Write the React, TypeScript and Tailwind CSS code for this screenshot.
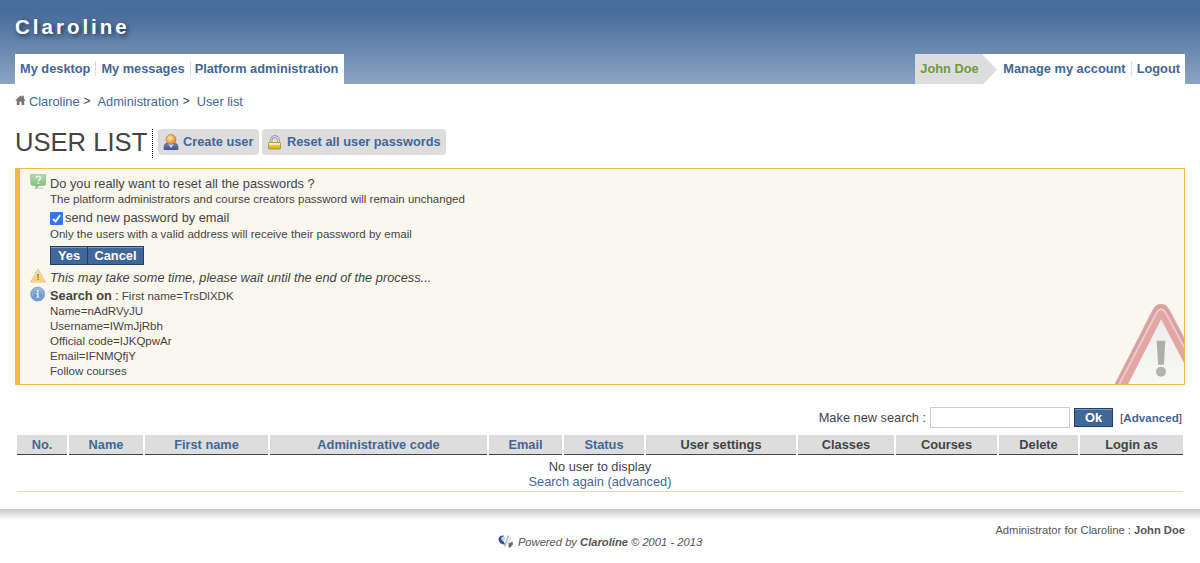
import React from "react";

function HomeIcon() {
  return (
    <svg className="mr-[3px] mb-[2px] h-[10px] w-[11px]" viewBox="0 0 10 10">
      <path d="M0 5.200L5 .6l1.600 1.500V.8h1.800v3L10 5.200l-.6.7-.7-.5V10H6V6.800H4V10H1.300V5.400l-.7.5z" fill="#7d736e" />
    </svg>
  );
}

function UserIcon() {
  return (
    <svg className="h-4 w-4 shrink-0" viewBox="0 0 16 16">
      <defs>
        <radialGradient id="face" cx=".4" cy=".35" r=".7">
          <stop offset="0" stopColor="#ffe3ae" />
          <stop offset=".55" stopColor="#f2a957" />
          <stop offset="1" stopColor="#c57a30" />
        </radialGradient>
        <linearGradient id="coat" x1="0" y1="0" x2="0" y2="1">
          <stop offset="0" stopColor="#6684c4" />
          <stop offset="1" stopColor="#35549f" />
        </linearGradient>
      </defs>
      <path d="M1 16v-3.500q.3-3 3.300-3.400h7.400q3 .4 3.300 3.400V16z" fill="url(#coat)" stroke="#49619c" strokeWidth=".6" />
      <path d="M5 9.500l3 4.500 3-4.500z" fill="#d9e4f5" />
      <path d="M1 14.700h2.500V16H1zM12.500 14.700H15V16h-2.500z" fill="#9b4943" />
      <circle cx="8" cy="5.500" r="5" fill="url(#face)" stroke="#a9713f" strokeWidth=".6" />
    </svg>
  );
}

function LockIcon() {
  return (
    <svg className="h-4 w-4 shrink-0" viewBox="0 0 16 16">
      <defs>
        <linearGradient id="lock" x1="0" y1="0" x2="0" y2="1">
          <stop offset="0" stopColor="#f3e78a" />
          <stop offset=".25" stopColor="#fffbc0" />
          <stop offset=".45" stopColor="#e5cf35" />
          <stop offset="1" stopColor="#cda91a" />
        </linearGradient>
      </defs>
      <path d="M4 9V6.400a3.800 3.800 0 0 1 7.600 0V9" fill="none" stroke="#8c8c8c" strokeWidth="2.600" />
      <path d="M4 9V6.400a3.800 3.800 0 0 1 7.600 0V9" fill="none" stroke="#dcdcdc" strokeWidth="1.200" />
      <rect x="1.500" y="8.500" width="12" height="6.500" rx=".7" fill="url(#lock)" stroke="#a38b2c" strokeWidth=".8" />
    </svg>
  );
}

function QuestionIcon() {
  return (
    <svg className="mt-px h-4 w-4" viewBox="0 0 16 16">
      <defs>
        <linearGradient id="bubble" x1="0" y1="0" x2="0" y2="1">
          <stop offset="0" stopColor="#b9dbb0" />
          <stop offset="1" stopColor="#79b878" />
        </linearGradient>
      </defs>
      <ellipse cx="9" cy="14.300" rx="5" ry=".9" fill="#d5d7cb" />
      <path d="M1.500.2h13q1 0 1 1V10q0 1.400-1.400 1.400H9.500L5.800 14.200l.3-2.800H2.500Q1 11.400.9 9.800L.5 1.200q0-1 1-1z" fill="url(#bubble)" stroke="#86b681" strokeWidth=".6" />
      <path d="M6.200 4.200q.2-1.900 2.200-1.900t2.100 1.600q0 1.100-1.200 1.800-.9.600-.9 1.500" fill="none" stroke="#eef8eb" strokeWidth="1.500" />
      <circle cx="8.400" cy="9.200" r=".9" fill="#eef8eb" />
    </svg>
  );
}

function WarnIcon() {
  return (
    <svg className="h-4 w-4" viewBox="0 0 16 16">
      <defs>
        <linearGradient id="warn" x1="0" y1="0" x2="0" y2="1">
          <stop offset="0" stopColor="#fff3ca" />
          <stop offset="1" stopColor="#f7cd58" />
        </linearGradient>
      </defs>
      <path d="M8 1.200L15.300 14H.7z" fill="#fdf3d8" stroke="#e8b97a" strokeWidth="1" strokeLinejoin="round" />
      <path d="M8 3.500L13.300 12.800H2.700z" fill="url(#warn)" stroke="#f2c75e" strokeWidth=".6" />
      <path d="M7.200 6h1.600l-.3 3.800h-1z" fill="#8a6d35" />
      <circle cx="8" cy="11.300" r=".8" fill="#8a6d35" />
    </svg>
  );
}

function InfoIcon() {
  return (
    <svg className="h-4 w-4" viewBox="0 0 16 16">
      <defs>
        <linearGradient id="info" x1="0" y1="0" x2="0" y2="1">
          <stop offset="0" stopColor="#9ab9e0" />
          <stop offset="1" stopColor="#5685c5" />
        </linearGradient>
      </defs>
      <g transform="translate(0 .6)">
        <circle cx="7.700" cy="7.500" r="7" fill="url(#info)" stroke="#6f93c4" strokeWidth=".7" />
        <circle cx="7.700" cy="7.500" r="5.300" fill="none" stroke="#a5c0e3" strokeWidth=".7" />
        <path d="M6.300 6.200h2.200v3.900h1v1H6.200v-1h1V7.200h-.9z" fill="#f4f7fb" />
        <circle cx="7.800" cy="4.400" r=".95" fill="#f4f7fb" />
      </g>
    </svg>
  );
}

function BigWarning() {
  return (
    <svg className="absolute right-0 bottom-0 h-[84px] w-[72px]" viewBox="0 0 72 84">
      <defs>
        <linearGradient id="sign" x1="0" y1="0" x2="0" y2="1">
          <stop offset="0" stopColor="#ececea" />
          <stop offset="1" stopColor="#f9faf7" />
        </linearGradient>
      </defs>
      <g transform="translate(.6 1.500)">
        <path d="M5 90L45 11.500q3.500-6.500 7 0L92 88" fill="url(#sign)" stroke="#e4a5a5" strokeWidth="12" />
        <path d="M1.200 88L42.300 9.500q6.200-9 12.400 0L96 86" fill="none" stroke="#d5a2a4" strokeWidth="2.400" />
        <path d="M3.800 88L43.800 11.500q4.700-7.500 9.400 0L93.500 86" fill="none" stroke="#eecaca" strokeWidth="1.800" />
      </g>
      <path d="M44.700 40.700h8.600l-1.400 24h-5.800z" fill="#aeafad" />
      <circle cx="49" cy="71.800" r="5" fill="#b3b4b2" />
    </svg>
  );
}

function FooterLogo() {
  return (
    <svg className="mr-[4px] h-4 w-4" viewBox="0 0 16 16">
      <path d="M5.500 1.500Q.5 1.500.5 5.500q.5 3.500 3.500 4.500l3.500 1-1.500-3-2-2q0-2 2-4z" fill="#35518d" />
      <circle cx="5.300" cy="4.600" r="2.100" fill="#c3d0e6" />
      <path d="M9.500 1.500h2L7.500 12.500H5.800z" fill="#b3bfd2" />
      <path d="M12 3l1.500.2L10.500 10l-1.700.8z" fill="#d3dae4" />
      <path d="M10.500 9.500l4.300-2v3L12.500 13.500h-2z" fill="#686c74" />
    </svg>
  );
}

const columns = [
  { label: "No.", link: true },
  { label: "Name", link: true },
  { label: "First name", link: true },
  { label: "Administrative code", link: true },
  { label: "Email", link: true },
  { label: "Status", link: true },
  { label: "User settings", link: false },
  { label: "Classes", link: false },
  { label: "Courses", link: false },
  { label: "Delete", link: false },
  { label: "Login as", link: false },
];

const criteria = ["Name=nAdRVyJU", "Username=IWmJjRbh", "Official code=IJKQpwAr", "Email=IFNMQfjY", "Follow courses"];

const button =
  "h-[19px] border border-[#1c3f70] bg-[#416798] text-[12.8px] leading-[17px] font-bold text-white shadow-[inset_0_1px_0_#7c9bc2]";

export default function App() {
  return (
    <div className="h-[563px] w-[1200px] overflow-hidden bg-white font-['Liberation_Sans',Arial,sans-serif] text-[12.8px] leading-[15px] whitespace-nowrap text-[#444]">
      <header className="flex h-[84px] flex-col justify-between bg-linear-to-b from-[#476d9b] from-15% to-[#8ba4c2] px-[15px]">
        <div className="pt-[15px] text-[20.5px] leading-[24px] font-bold tracking-[3px] text-white [text-shadow:2px_2px_5px_#1c2f47]">Claroline</div>
        <div className="flex h-[30px] justify-between font-bold text-[#416798]">
          <nav className="flex items-center bg-white pb-px">
            <a className="px-[5px]">My desktop</a>
            <a className="border-l border-[#ddd] px-[5px]">My messages</a>
            <a className="border-l border-[#ddd] pr-[6px] pl-[4px]">Platform administration</a>
          </nav>
          <nav className="flex bg-white">
            <span className="flex h-full w-[67px] items-center bg-[#ddd] pb-px pl-[5px] text-[#6e9a3a]">John Doe</span>
            <svg className="h-[30px] w-[16px]" viewBox="0 0 16 30">
              <path d="M0 0l15 15.500L1.500 30H0z" fill="#ddd" />
            </svg>
            <div className="flex items-center pb-px">
              <a className="px-[5px]">Manage my account</a>
              <a className="border-l border-[#ddd] px-[5px]">Logout</a>
            </div>
          </nav>
        </div>
      </header>

      <div className="flex h-[34px] items-center px-[15px] text-[12.8px] text-[#416798]">
        <HomeIcon />
        <a>Claroline</a>
        <span className="mr-[7px] ml-[4px] text-[12px] text-[#444]">&gt;</span>
        <a>Administration</a>
        <span className="mr-[7px] ml-[4px] text-[12px] text-[#444]">&gt;</span>
        <a>User list</a>
      </div>

      <div className="flex h-[50px] px-[15px] pt-[11px]">
        <h1 className="h-[29px] w-[138px] border-r border-dotted border-black text-[25.6px] leading-[27px]">USER LIST</h1>
        <div className="ml-[5px] flex gap-[3px] font-bold text-[#416798]">
          <a className="flex h-[26px] w-[101px] items-center gap-[4px] rounded-[4px] bg-[#ddd] px-[5px]">
            <UserIcon />
            <span className="pb-px">Create user</span>
          </a>
          <a className="flex h-[26px] items-center gap-[4px] rounded-[4px] bg-[#ddd] px-[5px]">
            <LockIcon />
            <span className="pb-px">Reset all user passwords</span>
          </a>
        </div>
      </div>

      <section className="relative mx-[15px] h-[217px] border border-l-[5px] border-[#f6b93e] bg-[#faf7ee] pt-[4px] pl-[10px]">
        <div className="flex">
          <div className="w-[20px]"><QuestionIcon /></div>
          <div>
            <p className="pt-[3px]">Do you really want to reset all the passwords ?</p>
            <p className="pt-px text-[11.5px]">The platform administrators and course creators password will remain unchanged</p>
            <label className="mt-[3px] flex h-[15px] items-center">
              <input type="checkbox" defaultChecked className="sr-only" />
              <svg className="mt-[2px] mr-[2px] h-[13px] w-[13px]" viewBox="0 0 13 13">
                <rect width="13" height="13" rx="1" fill="#2f78f0" />
                <path d="M3 6.800l2.600 2.700L10 3.300" fill="none" stroke="#fff" strokeWidth="1.900" />
              </svg>
              send new password by email
            </label>
            <p className="mt-[2px] text-[11.5px]">Only the users with a valid address will receive their password by email</p>
            <div className="mt-[4px] flex">
              <button className={`${button} w-[37px] border-r-0`}>Yes</button>
              <button className={`${button} w-[57px]`}>Cancel</button>
            </div>
          </div>
        </div>
        <div className="mt-[3px] flex h-[18px]">
          <div className="w-[20px]"><WarnIcon /></div>
          <p className="pt-[2px] italic">This may take some time, please wait until the end of the process...</p>
        </div>
        <div className="flex">
          <div className="w-[20px]"><InfoIcon /></div>
          <div className="text-[11.5px]">
            <p className="h-[18px] pt-[2px]"><b className="text-[12.8px]">Search on</b> <span className="text-[12.8px]">:</span> First name=TrsDlXDK</p>
            {criteria.map((line) => (
              <p key={line}>{line}</p>
            ))}
          </div>
        </div>
        <BigWarning />
      </section>

      <form className="flex h-[49px] items-center justify-end pt-[16px] pr-[18px]">
        <label>Make new search :</label>
        <input type="text" className="ml-[4px] h-[21px] w-[140px] border border-[#ccc] bg-white" />
        <button type="button" className={`${button} ml-[4px] w-[39px]`}>Ok</button>
        <span className="ml-[7px] text-[11.6px]">[<a className="font-bold text-[#416798]">Advanced</a>]</span>
      </form>

      <div className="mx-[17px]">
        <div className="mt-px grid grid-cols-[50px_74px_123px_217px_73px_80px_150px_96px_101px_79px_103px] gap-x-[2px]">
          {columns.map((column) => (
            <div
              key={column.label}
              className={`h-[20px] border-b border-[#444] bg-[#ddd] text-center leading-[19px] font-bold ${column.link ? "text-[#416798]" : ""}`}
            >
              {column.label}
            </div>
          ))}
        </div>
        <div className="h-[37px] border-b border-[#ddddbb] pt-[4px] text-center">
          <p>No user to display</p>
          <a className="block text-[#416798]">Search again (advanced)</a>
        </div>
      </div>

      <footer className="mt-[17px]">
        <div className="h-[11px] bg-linear-to-b from-[#c9c9c9] to-white" />
        <div className="grid grid-cols-3 px-[15px] text-[11.2px] text-[#555]">
          <div />
          <div className="flex items-center justify-center pt-[14px] italic">
            <FooterLogo />
            <span>Powered by <b>Claroline</b> © 2001 - 2013</span>
          </div>
          <div className="pt-[3px] text-right">Administrator for Claroline : <b>John Doe</b></div>
        </div>
      </footer>
    </div>
  );
}
